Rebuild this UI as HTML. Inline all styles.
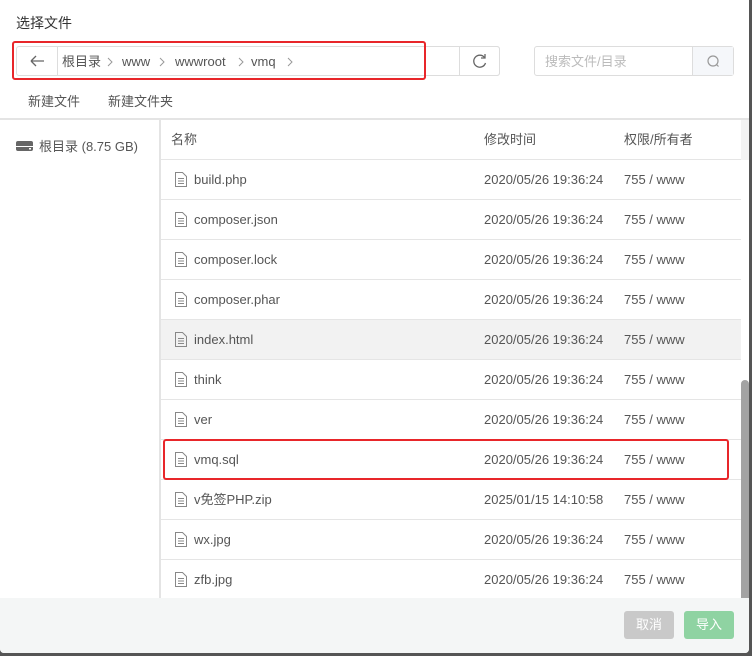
<!DOCTYPE html>
<html><head><meta charset="utf-8"><style>
*{box-sizing:border-box;margin:0;padding:0}
body{width:752px;height:656px;background:#555;font-family:"Liberation Sans","Noto Sans CJK SC",sans-serif;font-size:13px;line-height:16px;color:#555;position:relative;overflow:hidden}
.dlg{position:absolute;left:0;top:0;width:749px;height:653px;background:#fff;border-radius:0 0 4px 4px;overflow:hidden}
.abs{position:absolute}
.title{left:16px;top:15px;font-size:14px;color:#333}
.crumb{left:16px;top:46px;width:484px;height:30px;border:1px solid #ddd;border-radius:3px}
.crumb .back{position:absolute;left:0;top:0;width:41px;height:28px;border-right:1px solid #ddd}
.crumb span{position:absolute;top:7px;color:#555}
.crumb svg.c{position:absolute;top:10px}
.refresh{left:459px;top:46px;width:41px;height:30px;border:1px solid #ddd;border-radius:0 3px 3px 0}
.search{left:534px;top:46px;width:200px;height:30px;border:1px solid #ddd;border-radius:3px;color:#bbb;padding:7px 10px}
.sbtn{position:absolute;right:0;top:0;width:41px;height:28px;background:#f5f7fa;border-left:1px solid #ddd}
.red{border:2px solid #e8262a;border-radius:3px}
.tb{top:94px;color:#555}
.hline{left:0;top:118px;width:749px;height:2px;background:#e4e4e4}
.vline{left:159px;top:120px;width:2px;height:478px;background:#e4e4e4}
.row{position:absolute;left:161px;width:580px;height:40px;border-bottom:1px solid #e5e5e5}
.row .n{position:absolute;left:33px;top:12px}
.row .t{position:absolute;left:323px;top:12px}
.row .p{position:absolute;left:463px;top:12px}
.row svg{position:absolute;left:13px;top:11px}
.foot{left:0;top:598px;width:749px;height:55px;background:#f4f6f6}
.btn{top:611px;width:50px;height:28px;border-radius:3px;color:#fff;text-align:center;line-height:28px}
</style></head><body>
<div class="dlg">
<div class="abs title">选择文件</div>
<div class="abs crumb">
 <div class="back"><svg width="41" height="28"><path d="M14 14h13M14 14l5-5M14 14l5 5" stroke="#666" stroke-width="1.3" fill="none"/></svg></div>
 <span style="left:45px">根目录</span><svg class="c" style="left:90px" width="6" height="10"><path d="M1 1l4 4-4 4" stroke="#999" fill="none"/></svg>
 <span style="left:105px">www</span><svg class="c" style="left:142px" width="6" height="10"><path d="M1 1l4 4-4 4" stroke="#999" fill="none"/></svg>
 <span style="left:158px">wwwroot</span><svg class="c" style="left:221px" width="6" height="10"><path d="M1 1l4 4-4 4" stroke="#999" fill="none"/></svg>
 <span style="left:234px">vmq</span><svg class="c" style="left:270px" width="6" height="10"><path d="M1 1l4 4-4 4" stroke="#999" fill="none"/></svg>
</div>
<div class="abs refresh"><svg width="40" height="28"><path d="M24.5 10.5A6 6 0 1 0 25.5 16" stroke="#666" stroke-width="1.3" fill="none"/><path d="M25 7v4h-4" stroke="#666" stroke-width="1.3" fill="none"/></svg></div>
<div class="abs search">搜索文件/目录<div class="sbtn"><svg width="40" height="28"><circle cx="20" cy="14" r="5" stroke="#999" stroke-width="1.2" fill="none"/><path d="M23.5 17.5l2 2" stroke="#999" stroke-width="1.2"/></svg></div></div>
<div class="abs red" style="left:12px;top:41px;width:414px;height:39px"></div>
<div class="abs tb" style="left:28px">新建文件</div>
<div class="abs tb" style="left:108px">新建文件夹</div>
<div class="abs hline"></div>
<div class="abs vline"></div>
<div class="abs" style="left:16px;top:138px"><svg width="18" height="16"><rect x="0" y="3" width="17" height="10" rx="2" fill="#666"/><rect x="0" y="8" width="17" height="1" fill="#fff"/><rect x="13" y="10" width="2" height="1.5" fill="#fff"/></svg></div>
<div class="abs" style="left:39px;top:139px;color:#555">根目录 (8.75 GB)</div>
<div class="abs" style="left:741px;top:120px;width:8px;height:40px;background:#f3f3f3"></div>
<div class="abs" style="left:741px;top:380px;width:8px;height:218px;background:#a3a3a3;border-radius:4px 4px 0 0"></div>
<div class="row" style="top:120px"><span class="n" style="left:10px">名称</span><span class="t">修改时间</span><span class="p">权限/所有者</span></div>
<div id="rows"></div>
<div class="abs red" style="left:163px;top:439px;width:566px;height:41px"></div>
<div class="abs foot"></div>
<div class="abs btn" style="left:624px;background:#c9c9c9">取消</div>
<div class="abs btn" style="left:684px;background:#8fd3a2">导入</div>
</div>
<script>
var f=[["build.php",0],["composer.json",0],["composer.lock",0],["composer.phar",0],["index.html",0],["think",0],["ver",0],["vmq.sql",0],["v免签PHP.zip",1],["wx.jpg",0],["zfb.jpg",0]];
var h="";
f.forEach(function(x,i){var bg=i==4?"background:#f2f2f2;":"";
h+='<div class="row" style="top:'+(160+i*40)+'px;'+bg+'"><svg width="14" height="17"><path d="M1.5 1.5h7l4 4v10h-11z" stroke="#888" fill="none"/><path d="M4 7.5h6M4 10h6M4 12.5h6" stroke="#888"/></svg><span class="n">'+x[0]+'</span><span class="t">'+(x[1]?"2025/01/15 14:10:58":"2020/05/26 19:36:24")+'</span><span class="p">755 / www</span></div>';});
document.getElementById("rows").innerHTML=h;
</script>
</body></html>
